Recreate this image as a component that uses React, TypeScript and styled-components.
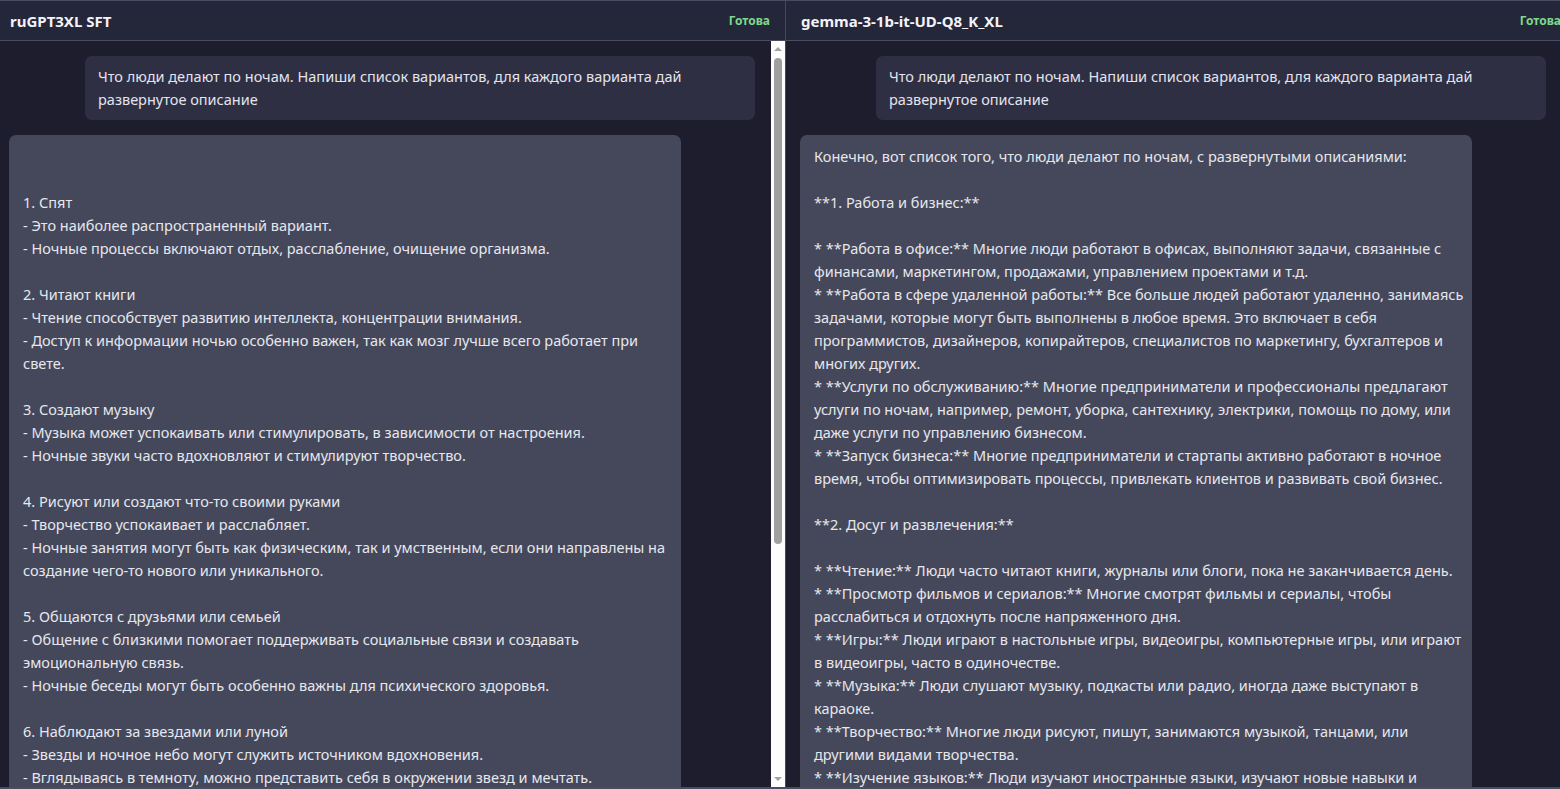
import React from 'react';
import styled, { createGlobalStyle } from 'styled-components';

const GlobalStyle = createGlobalStyle`
  html, body {
    margin: 0;
    padding: 0;
    background: #1e1d2d;
    overflow: hidden;
  }
  body {
    font-family: "Noto Sans", "Open Sans", sans-serif;
  }
`;

const question =
  'Что люди делают по ночам. Напиши список вариантов, для каждого варианта дай\nразвернутое описание';

const leftAnswer = `

1. Спят
- Это наиболее распространенный вариант.
- Ночные процессы включают отдых, расслабление, очищение организма.

2. Читают книги
- Чтение способствует развитию интеллекта, концентрации внимания.
- Доступ к информации ночью особенно важен, так как мозг лучше всего работает при
свете.

3. Создают музыку
- Музыка может успокаивать или стимулировать, в зависимости от настроения.
- Ночные звуки часто вдохновляют и стимулируют творчество.

4. Рисуют или создают что-то своими руками
- Творчество успокаивает и расслабляет.
- Ночные занятия могут быть как физическим, так и умственным, если они направлены на
создание чего-то нового или уникального.

5. Общаются с друзьями или семьей
- Общение с близкими помогает поддерживать социальные связи и создавать
эмоциональную связь.
- Ночные беседы могут быть особенно важны для психического здоровья.

6. Наблюдают за звездами или луной
- Звезды и ночное небо могут служить источником вдохновения.
- Вглядываясь в темноту, можно представить себя в окружении звезд и мечтать.`;

const rightAnswer = `Конечно, вот список того, что люди делают по ночам, с развернутыми описаниями:

**1. Работа и бизнес:**

* **Работа в офисе:** Многие люди работают в офисах, выполняют задачи, связанные с
финансами, маркетингом, продажами, управлением проектами и т.д.
* **Работа в сфере удаленной работы:** Все больше людей работают удаленно, занимаясь
задачами, которые могут быть выполнены в любое время. Это включает в себя
программистов, дизайнеров, копирайтеров, специалистов по маркетингу, бухгалтеров и
многих других.
* **Услуги по обслуживанию:** Многие предприниматели и профессионалы предлагают
услуги по ночам, например, ремонт, уборка, сантехнику, электрики, помощь по дому, или
даже услуги по управлению бизнесом.
* **Запуск бизнеса:** Многие предприниматели и стартапы активно работают в ночное
время, чтобы оптимизировать процессы, привлекать клиентов и развивать свой бизнес.

**2. Досуг и развлечения:**

* **Чтение:** Люди часто читают книги, журналы или блоги, пока не заканчивается день.
* **Просмотр фильмов и сериалов:** Многие смотрят фильмы и сериалы, чтобы
расслабиться и отдохнуть после напряженного дня.
* **Игры:** Люди играют в настольные игры, видеоигры, компьютерные игры, или играют
в видеоигры, часто в одиночестве.
* **Музыка:** Люди слушают музыку, подкасты или радио, иногда даже выступают в
караоке.
* **Творчество:** Многие люди рисуют, пишут, занимаются музыкой, танцами, или
другими видами творчества.
* **Изучение языков:** Люди изучают иностранные языки, изучают новые навыки и`;

const panels = [
  { model: 'ruGPT3XL SFT', status: 'Готова', answer: leftAnswer },
  { model: 'gemma-3-1b-it-UD-Q8_K_XL', status: 'Готова', answer: rightAnswer },
];

const ChatPanel: React.FC<{ model: string; status: string; answer: string }> = ({ model, status, answer }) => (
  <StyledPanel>
    <StyledHeader>
      <StyledModel>{model}</StyledModel>
      <StyledStatus>{status}</StyledStatus>
    </StyledHeader>
    <StyledBody>
      <StyledMessages>
        <UserBubble>{question}</UserBubble>
        <BotBubble>{answer}</BotBubble>
      </StyledMessages>
      <Scrollbar>
        <ScrollArrow up />
        <ScrollTrack>
          <ScrollThumb />
        </ScrollTrack>
        <ScrollArrow />
      </Scrollbar>
    </StyledBody>
  </StyledPanel>
);

const App: React.FC = () => (
  <>
    <GlobalStyle />
    <StyledPage>
      {panels.map((p) => (
        <ChatPanel key={p.model} {...p} />
      ))}
    </StyledPage>
  </>
);

const StyledPage = styled.div`
  display: flex;
  height: 789px;
  margin-left: -5px;
  box-sizing: border-box;
  border-top: 1px solid #4a4c62;
  border-bottom: 2px solid #4a4c62;
  overflow: hidden;
`;

const StyledPanel = styled.div`
  flex: 0 0 791px;
  display: flex;
  flex-direction: column;
  border-right: 1px solid #45475c;
  box-sizing: border-box;
  min-height: 0;
`;

const StyledHeader = styled.div`
  flex: 0 0 39px;
  display: flex;
  align-items: center;
  justify-content: space-between;
  padding: 0 15px 0 15px;
  background: #24263a;
  border-bottom: 1px solid #4a4c62;
`;

const StyledModel = styled.div`
  color: #f2f3f8;
  font-size: 15px;
  font-weight: 700;
`;

const StyledStatus = styled.div`
  color: #7fd88a;
  font-size: 12px;
  font-weight: 700;
`;

const StyledBody = styled.div`
  flex: 1;
  display: flex;
  min-height: 0;
`;

const StyledMessages = styled.div`
  flex: 1;
  display: flex;
  flex-direction: column;
  gap: 15px;
  padding: 15px 16px 0 14px;
  overflow: hidden;
  min-width: 0;
`;

const UserBubble = styled.div`
  align-self: flex-end;
  width: 670px;
  box-sizing: border-box;
  padding: 9px 13px;
  background: #2f2f44;
  border-radius: 7px;
  color: #e3e4ec;
  font-size: 14.5px;
  line-height: 23px;
  white-space: pre;
`;

const BotBubble = styled.div`
  align-self: flex-start;
  flex-shrink: 0;
  width: 672px;
  box-sizing: border-box;
  padding: 10px 14px;
  background: #45475a;
  border-radius: 7px;
  color: #e6e7ee;
  font-size: 14.5px;
  line-height: 23px;
  white-space: pre;
`;

const Scrollbar = styled.div`
  flex: 0 0 14px;
  display: flex;
  flex-direction: column;
  background: #fdfdfd;
`;

const ScrollArrow = styled.div<{ up?: boolean }>`
  flex: 0 0 16px;
  display: flex;
  align-items: center;
  justify-content: center;
  &::before {
    content: '';
    width: 0;
    height: 0;
    border-left: 4px solid transparent;
    border-right: 4px solid transparent;
    ${(p) => (p.up ? 'border-bottom: 4px solid #a3a3a3;' : 'border-top: 4px solid #a3a3a3;')}
  }
`;

const ScrollTrack = styled.div`
  flex: 1;
  display: flex;
  flex-direction: column;
  align-items: center;
`;

const ScrollThumb = styled.div`
  width: 8px;
  height: 486px;
  margin-top: 1px;
  background: #a0a0a0;
  border-radius: 4px;
`;

export default App;
